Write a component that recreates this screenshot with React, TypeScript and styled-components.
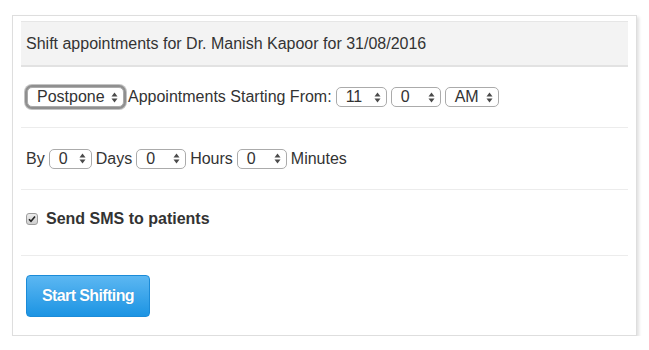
import * as React from "react";
import styled, { createGlobalStyle } from "styled-components";

const GlobalStyle = createGlobalStyle`
  body {
    margin: 0;
    background: #fff;
    font-family: "Liberation Sans", Arial, Helvetica, sans-serif;
    color: #333;
  }
`;

const SPage = styled.div`
  padding: 15px 0 0 12px;
`;

const SCard = styled.div`
  box-sizing: border-box;
  width: 625px;
  height: 321px;
  padding: 5px 8px 0 8px;
  background: #fff;
  border: 1px solid #dedede;
  box-shadow: 2px 2px 3px rgba(0, 0, 0, 0.12);
`;

const SHeader = styled.div`
  box-sizing: border-box;
  height: 46px;
  display: flex;
  align-items: center;
  padding-left: 5px;
  background: #f3f3f3;
  border-top: 1px solid #e6e6e6;
  border-bottom: 2px solid #e2e2e2;
  font-size: 16px;
`;

const SRow = styled.div<{ $height: number; $padBottom?: number }>`
  box-sizing: border-box;
  height: ${(p) => p.$height}px;
  display: flex;
  align-items: center;
  gap: 4px;
  padding: 0 0 ${(p) => p.$padBottom ?? 0}px 5px;
  border-bottom: 1px solid #ececec;
  font-size: 16px;
`;

const SSelect = styled.div<{ $width: number; $focused?: boolean }>`
  box-sizing: border-box;
  width: ${(p) => p.$width}px;
  height: 20px;
  display: flex;
  align-items: center;
  justify-content: space-between;
  padding: 0 5px 0 9px;
  background: #fff;
  border: 1px solid #ababab;
  border-radius: 5px;
  font-size: 16px;
  color: #333;
  ${(p) =>
    p.$focused &&
    `
    margin-left: 1px;
    box-shadow: 0 0 0 2px #8f8f8f, 0 0 0 3px #c4c4c4;
  `}
`;

const SArrows = styled.svg`
  flex: none;
`;

const SCheckRow = styled.label`
  display: flex;
  align-items: center;
  gap: 8px;
  font-size: 16px;
  font-weight: bold;
`;

const SCheckbox = styled.span`
  box-sizing: border-box;
  width: 12px;
  height: 12px;
  display: flex;
  align-items: center;
  justify-content: center;
  border: 1px solid #9c9c9c;
  border-radius: 3px;
  background: linear-gradient(#ececec, #cfcfcf);
`;

const SButtonRow = styled.div`
  padding: 19px 0 0 5px;
`;

const SButton = styled.button`
  box-sizing: border-box;
  width: 124px;
  height: 42px;
  border: 1px solid #1b8bd8;
  border-radius: 4px;
  background: linear-gradient(#5cb7f2, #1c94e3);
  color: #fff;
  font-family: "Liberation Sans", Arial, Helvetica, sans-serif;
  font-size: 16px;
  font-weight: bold;
  letter-spacing: -0.6px;
  text-shadow: 0 0 1px rgba(0, 60, 120, 0.3);
  cursor: pointer;
`;

const Arrows = () => (
  <SArrows width="7" height="11" viewBox="0 0 7 11">
    <path d="M3.5 0.5 L6.5 4.5 L0.5 4.5 Z" fill="#4a4a4a" />
    <path d="M3.5 10.5 L6.5 6.5 L0.5 6.5 Z" fill="#4a4a4a" />
  </SArrows>
);

const Select = ({
  value,
  width,
  focused
}: {
  value: string;
  width: number;
  focused?: boolean;
}) => (
  <SSelect $width={width} $focused={focused}>
    <span>{value}</span>
    <Arrows />
  </SSelect>
);

const App = () => (
  <SPage>
    <GlobalStyle />
    <SCard>
      <SHeader>Shift appointments for Dr. Manish Kapoor for 31/08/2016</SHeader>
      <SRow $height={61}>
        <Select value="Postpone" width={97} focused />
        <span>Appointments Starting From:</span>
        <Select value="11" width={51} />
        <Select value="0" width={50} />
        <Select value="AM" width={54} />
      </SRow>
      <SRow $height={62}>
        <span>By</span>
        <Select value="0" width={43} />
        <span>Days</span>
        <Select value="0" width={50} />
        <span>Hours</span>
        <Select value="0" width={50} />
        <span>Minutes</span>
      </SRow>
      <SRow $height={66} $padBottom={7}>
        <SCheckRow>
          <SCheckbox>
            <svg width="8" height="8" viewBox="0 0 8 8">
              <path
                d="M1 4.2 L3 6.3 L7 1.5"
                fill="none"
                stroke="#222"
                strokeWidth="1.6"
              />
            </svg>
          </SCheckbox>
          Send SMS to patients
        </SCheckRow>
      </SRow>
      <SButtonRow>
        <SButton>Start Shifting</SButton>
      </SButtonRow>
    </SCard>
  </SPage>
);

export default App;
